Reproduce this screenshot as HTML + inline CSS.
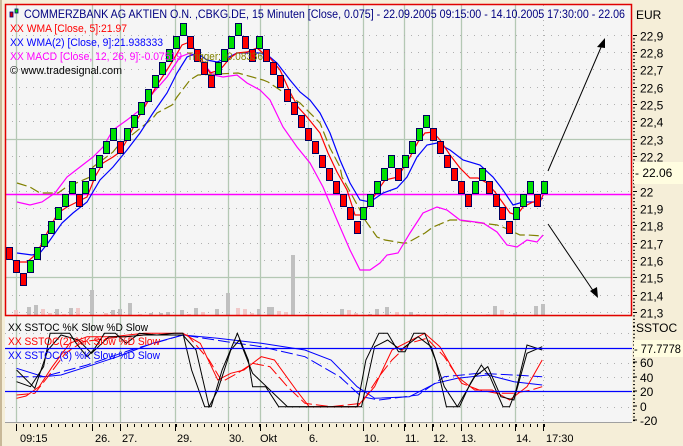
<!DOCTYPE html>
<html><head><meta charset="utf-8">
<style>
html,body{margin:0;padding:0;background:#f5eed8;}
svg{display:block;font-family:"Liberation Sans",sans-serif;}
</style></head>
<body>
<svg id="s" width="683" height="446" xmlns="http://www.w3.org/2000/svg">
<rect x="0" y="0" width="683" height="446" fill="#f5eed8"/>
<rect x="0" y="0" width="2" height="446" fill="#c8b898"/>
<rect x="5" y="4" width="627" height="312" fill="#f5f5f5"/>
<rect x="5" y="317" width="627" height="105" fill="#f5f5f5"/>
<line x1="5" y1="422.5" x2="632" y2="422.5" stroke="#a0a0a0"/>
<g id="grid"></g>
<g id="vol"></g>
<line x1="5" y1="194.5" x2="632" y2="194.5" stroke="#ff00ff" stroke-width="1.5"/>
<g id="lines" fill="none"></g>
<g id="bricks"></g>
<g id="stoch" fill="none"></g>
<line x1="5" y1="348.5" x2="632" y2="348.5" stroke="#0000ff" stroke-width="1.3"/>
<line x1="5" y1="391.5" x2="632" y2="391.5" stroke="#0000ff" stroke-width="1.3"/>
<rect x="5.5" y="4.5" width="626" height="311" fill="none" stroke="#e00000" stroke-width="1.5"/>
<line x1="548" y1="171" x2="602" y2="45" stroke="#000" stroke-width="1"/>
<polygon points="605,38 597,47 605,48" fill="#000"/>
<line x1="548" y1="224" x2="594" y2="292" stroke="#000" stroke-width="1"/>
<polygon points="598,298 590,291 597,287" fill="#000"/>
<rect x="10" y="12" width="3" height="5" fill="#e00000" stroke="#000080" stroke-width="0.8"/>
<rect x="15" y="9" width="3" height="4" fill="#00e000" stroke="#000080" stroke-width="0.8"/>
<text x="24" y="18" font-size="11.5" fill="#000080" textLength="601" lengthAdjust="spacingAndGlyphs">COMMERZBANK AG AKTIEN O.N. ,CBKG.DE, 15 Minuten [Close, 0.075] - 22.09.2005 09:15:00 - 14.10.2005 17:30:00 - 22.06</text>
<text x="10" y="32" font-size="11" fill="#ff0000" textLength="117" lengthAdjust="spacingAndGlyphs">XX WMA [Close, 5]:21.97</text>
<text x="10" y="46" font-size="11" fill="#0000ff" textLength="153" lengthAdjust="spacingAndGlyphs">XX WMA(2) [Close, 9]:21.938333</text>
<text x="10" y="60" font-size="11" fill="#ff00ff" textLength="172" lengthAdjust="spacingAndGlyphs">XX MACD [Close, 12, 26, 9]:-0.07519</text>
<text x="187" y="60" font-size="11" fill="#808000" textLength="76" lengthAdjust="spacingAndGlyphs">Trigger: -0.08336</text>
<text x="10" y="74" font-size="11" fill="#000" textLength="112" lengthAdjust="spacingAndGlyphs">© www.tradesignal.com</text>
<text x="8" y="331" font-size="11" fill="#000" textLength="140" lengthAdjust="spacingAndGlyphs">XX SSTOC %K Slow %D Slow</text>
<text x="8" y="345" font-size="11" fill="#ff0000" textLength="152" lengthAdjust="spacingAndGlyphs">XX SSTOC(2) %K Slow %D Slow</text>
<text x="8" y="359" font-size="11" fill="#0000ff" textLength="152" lengthAdjust="spacingAndGlyphs">XX SSTOC(3) %K Slow %D Slow</text>
<text x="636" y="19" font-size="12" fill="#000">EUR</text>
<g id="axis" font-size="12" fill="#000"></g>
<rect x="634" y="162" width="49" height="22" fill="#fffde0"/>
<text x="635" y="177" font-size="12" fill="#000">- 22.06</text>
<text x="636" y="332" font-size="12" fill="#000">SSTOC</text>
<rect x="634" y="340" width="49" height="17" fill="#fffde0"/>
<text x="634" y="353" font-size="11.5" fill="#000" textLength="47" lengthAdjust="spacingAndGlyphs">- 77.7778</text>
</svg>
<script>
var NS="http://www.w3.org/2000/svg";
function el(p,t,a,txt){var e=document.createElementNS(NS,t);for(var k in a)e.setAttribute(k,a[k]);if(txt!=null)e.textContent=txt;document.getElementById(p).appendChild(e);return e;}
var vx=[16,92,120,175,228,260,308,363,404,432,461,515];
vx.forEach(function(x){el("grid","line",{x1:x+.5,y1:5,x2:x+.5,y2:422,stroke:"#b4c8b4","stroke-width":1.3});});
el("grid","line",{x1:543.5,y1:5,x2:543.5,y2:422,stroke:"#b0b0b0","stroke-dasharray":"1,4"});
function py(p){return 34.5+(22.9-p)*173.4;}
for(var i=0;i<=16;i++){var p=22.9-i*0.1;var y=Math.round(py(p))+.5;
 if(Math.abs(p-22.3)<.01||Math.abs(p-21.5)<.01) el("grid","line",{x1:5,y1:y,x2:632,y2:y,stroke:"#b4c8b4","stroke-width":1.3});
 else el("grid","line",{x1:5,y1:y,x2:632,y2:y,stroke:"#b0b0b0","stroke-dasharray":"1,6"});
 var lab=(Math.round(p*10)/10).toFixed(1).replace(".",","); if(lab=="22,0")lab="22";
 el("axis","text",{x:640,y:y+5},lab);
 el("axis","line",{x1:633,y1:y,x2:637,y2:y,stroke:"#000"});
 for(var k=1;k<5;k++){el("axis","line",{x1:633,y1:y+k*3.4,x2:635,y2:y+k*3.4,stroke:"#000"});}
}
[333,363,377,407].forEach(function(y){el("grid","line",{x1:5,y1:y+.5,x2:632,y2:y+.5,stroke:"#b0b0b0","stroke-dasharray":"1,6"});});
[[60,362],[40,377],[20,391],[0,406],["-20",420]].forEach(function(a){el("axis","text",{x:640,y:a[1]+5},a[0]);el("axis","line",{x1:633,y1:a[1],x2:637,y2:a[1],stroke:"#000"});});
for(var y=327;y<422;y+=3.6)el("axis","line",{x1:633,y1:y,x2:635,y2:y,stroke:"#000"});
var tl=[[16,"09:15",20],[92,"26.",95],[120,"27.",122],[175,"29.",177],[228,"30.",229],[260,"Okt",260],[308,"6.",309],[363,"10.",364],[404,"11.",405],[432,"12.",433],[461,"13.",461],[515,"14.",516],[543,"17:30",546]];
tl.forEach(function(t){el("axis","line",{x1:t[0]+.5,y1:424,x2:t[0]+.5,y2:431,stroke:"#000"});el("axis","text",{x:t[2],y:442,"font-size":11},t[1]);});
for(var x=16;x<545;x+=6.95)el("axis","line",{x1:Math.round(x)+.5,y1:424,x2:Math.round(x)+.5,y2:427,stroke:"#000"});
var vol=[[14,310,1],[27,307,0],[34,305,0],[41,309,1],[48,313,1],[55,309,0],[62,314,1],[69,308,0],[76,308,1],[90,290,0],[104,313,1],[111,310,0],[118,309,0],[128,303,0],[138,314,1],[149,313,0],[159,313,0],[166,312,0],[173,315,1],[180,310,0],[187,314,1],[194,308,0],[201,312,1],[208,315,1],[215,309,0],[226,293,0],[236,308,1],[243,309,1],[250,313,1],[257,309,0],[267,307,0],[270,307,0],[277,311,1],[284,312,1],[291,255,0],[305,314,1],[319,316,1],[326,315,0],[333,315,0],[340,309,0],[347,310,1],[354,313,1],[361,316,1],[368,314,0],[375,309,0],[385,307,0],[395,312,1],[402,314,1],[409,312,0],[416,314,1],[423,316,1],[430,315,0],[444,316,0],[458,315,0],[472,315,1],[486,316,0],[493,306,0],[500,310,1],[513,313,0],[524,315,1],[534,306,0],[541,304,0]];
vol.forEach(function(v){var h=316-v[1];if(h<1)h=1.5;el("vol","rect",{x:v[0],y:316-h,width:4,height:h,fill:v[2]?"#f0c8c8":"#c0c0c0"});});
function pl(id,pts,col,w,dash){var a={points:pts.map(function(p){return p.join(",")}).join(" "),stroke:col,"stroke-width":w||1,fill:"none"};if(dash)a["stroke-dasharray"]=dash;return el(id,"polyline",a);}
var red=[[17,262],[27,262],[33,257],[40,247],[50,227],[58,213],[67,207],[77,202],[87,197],[95,177],[103,163],[113,157],[120,152],[127,140],[137,120],[147,103],[157,85],[167,70],[175,57],[182,45],[187,43],[193,47],[200,57],[210,73],[220,70],[230,58],[237,53],[247,52],[257,48],[263,53],[270,58],[280,70],[290,92],[298,107],[307,117],[320,133],[328,153],[337,172],[347,190],[355,215],[362,215],[370,203],[378,190],[385,180],[398,177],[410,157],[418,142],[425,133],[433,132],[440,140],[450,155],[460,168],[470,178],[478,178],[487,183],[495,192],[503,203],[510,213],[517,215],[523,207],[533,202],[540,202],[543,195]];
var blue=[[17,253],[32,255],[40,253],[48,243],[62,223],[73,213],[87,202],[100,180],[113,167],[127,150],[140,133],[153,113],[167,93],[177,73],[187,57],[197,53],[207,60],[217,62],[227,58],[237,53],[250,53],[260,53],[270,57],[277,63],[290,80],[300,92],[310,100],[320,113],[330,133],[340,160],[350,183],[360,200],[370,202],[383,193],[397,188],[407,177],[417,157],[427,145],[437,143],[450,150],[463,160],[480,165],[493,177],[503,190],[513,205],[523,202],[537,202],[543,198]];
var mag=[[17,202],[30,205],[42,202],[55,193],[67,177],[80,167],[93,157],[103,147],[113,130],[127,120],[140,110],[153,93],[167,77],[180,57],[190,53],[203,63],[213,75],[223,77],[237,75],[247,83],[260,90],[270,100],[283,127],[297,147],[310,163],[323,187],[337,220],[350,250],[360,270],[370,270],[380,263],[387,255],[398,253],[410,233],[423,213],[437,207],[447,210],[460,220],[483,223],[497,232],[507,245],[517,247],[527,240],[537,242],[543,235]];
var oli=[[17,183],[30,187],[40,193],[58,193],[65,188],[90,177],[93,167],[113,152],[117,147],[153,118],[157,113],[172,105],[177,97],[190,80],[198,75],[238,73],[245,75],[263,80],[268,82],[280,90],[300,103],[320,123],[330,148],[340,167],[342,177],[360,210],[365,220],[377,237],[385,240],[403,243],[407,243],[425,233],[433,227],[450,220],[457,220],[497,225],[505,228],[520,235],[528,235],[543,236]];
pl("lines",oli,"#808000",1.2,"10,4");
pl("lines",mag,"#ff00ff",1.2);
pl("lines",blue,"#0000ff",1.2);
pl("lines",red,"#ff0000",1.2);
var L="R0 R-1 R-2 G-1 G0 G1 G2 G3 G4 G5 R4 G5 G6 G7 G8 G9 R8 G9 G10 G11 G12 G13 G14 G15 G16 G17 R16 R15 R14 R13 G14 G15 G16 G17 R16 R15 G16 R15 R14 R13 R12 R11 R10 R9 R8 R7 R6 R5 R4 R3 R2 G3 G4 G5 G6 G7 R6 G7 G8 G9 G10 R9 R8 R7 R6 R5 R4 G5 G6 R5 R4 R3 R2 G3 G4 G5 R4 G5".split(" ");
L.forEach(function(b,i){var c=b[0]=="G"?"#00e000":"#ff0000";var lv=parseInt(b.slice(1));var x=Math.round(6+i*6.95);var y=Math.round(247-13.2*lv);
 el("bricks","rect",{x:x+.5,y:y+.5,width:6,height:12,fill:c,stroke:"#000060","stroke-width":1});});
function sc(arr){return arr.map(function(p){return [+(p[0]/2.296).toFixed(1),+(p[1]/3+310).toFixed(1)];});}
var k1=[[38,215],[70,230],[100,170],[115,70],[160,70],[175,100],[200,140],[215,120],[240,70],[265,70],[290,100],[320,70],[360,75],[400,70],[420,70],[440,180],[470,290],[485,290],[510,180],[545,70],[570,150],[580,230],[610,230],[640,290],[700,290],[820,290],[840,150],[870,70],[890,70],[915,125],[930,125],[950,70],[975,70],[1000,150],[1025,290],[1055,290],[1080,220],[1105,165],[1125,200],[1155,290],[1170,290],[1185,240],[1210,105],[1245,120]];
var k2=[[38,180],[80,235],[110,120],[140,75],[180,90],[210,130],[250,80],[290,80],[330,75],[420,75],[450,120],[480,290],[500,240],[530,120],[550,90],[580,190],[620,240],[660,290],[830,290],[860,110],[890,90],[920,120],[960,80],[990,110],[1020,230],[1050,290],[1090,200],[1120,170],[1150,260],[1180,270],[1210,130],[1245,110]];
var r1=[[38,265],[60,258],[90,230],[120,170],[160,100],[200,80],[260,80],[330,70],[420,70],[460,100],[500,210],[530,190],[560,180],[600,140],[630,150],[680,240],[710,290],[820,290],[860,230],[900,120],[930,100],[975,70],[1010,110],[1050,200],[1090,240],[1130,240],[1170,270],[1210,230],[1245,150]];
var r2=[[38,255],[80,250],[110,200],[150,130],[190,95],[250,85],[330,75],[430,75],[480,150],[510,215],[545,190],[580,160],[620,170],[660,230],[700,280],[760,290],[830,280],[870,200],[900,150],[940,100],[980,85],[1020,140],[1060,220],[1100,240],[1140,250],[1180,250],[1220,240],[1245,230]];
var b1=[[38,175],[100,200],[140,195],[200,170],[270,140],[350,100],[420,75],[500,85],[600,100],[700,120],[760,150],[820,230],[860,265],[940,260],[1000,220],[1050,205],[1120,195],[1180,215],[1245,225]];
var b2=[[38,200],[100,200],[200,165],[300,120],[420,75],[520,95],[600,110],[700,140],[780,200],[830,260],[870,270],[960,255],[1020,200],[1100,190],[1180,195],[1245,200]];
pl("stoch",sc(b2),"#0000ff",1,"12,4");pl("stoch",sc(b1),"#0000ff",1);
pl("stoch",sc(r2),"#ff0000",1,"12,4");pl("stoch",sc(r1),"#ff0000",1);
pl("stoch",sc(k2),"#000",1);pl("stoch",sc(k1),"#000",1);
</script>
</body></html>
